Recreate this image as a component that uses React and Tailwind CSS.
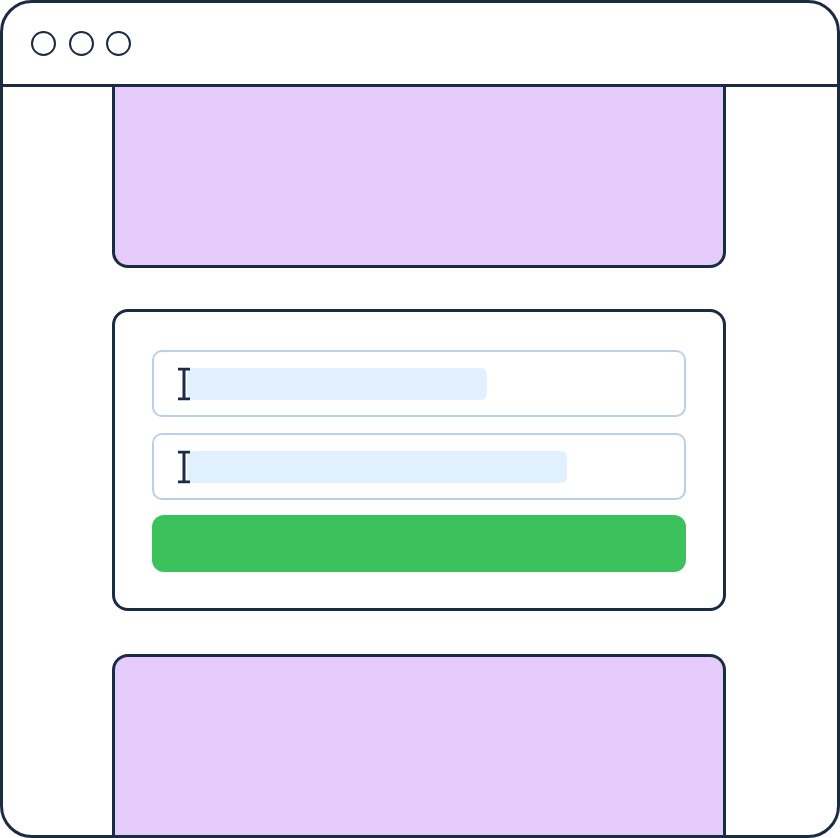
import React from "react";

function Cursor() {
  return (
    <svg
      className="absolute left-[23px] top-1/2 -translate-y-1/2"
      width="14"
      height="33"
      viewBox="0 0 14 33"
      fill="none"
    >
      <path d="M1 1.5H13M1 31.5H13M7 1.5V31.5" stroke="#1a2b44" strokeWidth="3" />
    </svg>
  );
}

function Field({ width }) {
  return (
    <div className="relative flex h-[67px] items-center rounded-[10px] border-[2.5px] border-[#b9d0e8] bg-white pl-[33px]">
      <div className="h-[32px] rounded-md bg-[#e1f0fe]" style={{ width }} />
      <Cursor />
    </div>
  );
}

export default function App() {
  return (
    <div className="flex h-[838px] w-[840px] flex-col overflow-hidden rounded-[32px] border-[3px] border-[#1a2b44] bg-white">
      <div className="flex h-[84px] shrink-0 items-center gap-[12.5px] border-b-[3px] border-[#1a2b44] pl-[28px]">
        <div className="h-[25px] w-[25px] rounded-full border-[2.5px] border-[#1a2b44]" />
        <div className="h-[25px] w-[25px] rounded-full border-[2.5px] border-[#1a2b44]" />
        <div className="h-[25px] w-[25px] rounded-full border-[2.5px] border-[#1a2b44]" />
      </div>

      <div className="ml-[109px] flex w-[614px] flex-1 flex-col">
        <div className="h-[181px] shrink-0 rounded-b-2xl border-x-[3px] border-b-[3px] border-[#1a2b44] bg-[#e4cbf9]" />

        <div className="mt-[41px] flex flex-col rounded-2xl border-[3px] border-[#1a2b44] px-[37px] pt-[38px] pb-[36px]">
          <Field width={300} />
          <div className="mt-[16px]">
            <Field width={380} />
          </div>
          <div className="mt-[15px] h-[57px] rounded-xl bg-[#3dc15c]" />
        </div>

        <div className="mt-[43px] flex-1 rounded-t-2xl border-x-[3px] border-t-[3px] border-[#1a2b44] bg-[#e4cbf9]" />
      </div>
    </div>
  );
}
